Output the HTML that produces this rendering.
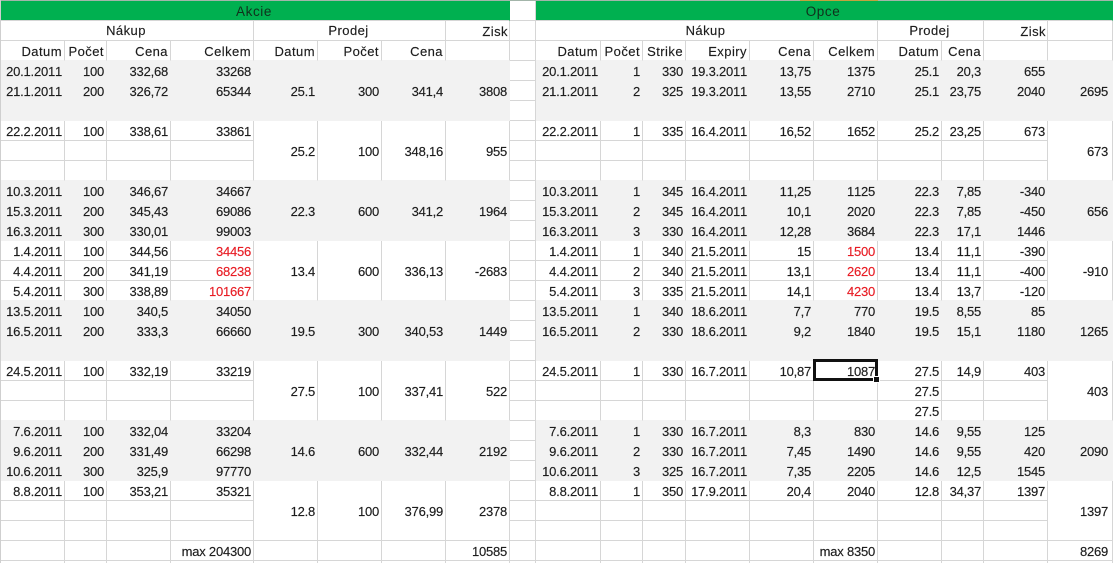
<!DOCTYPE html>
<html><head><meta charset="utf-8"><style>
html,body{margin:0;padding:0;background:#fff;width:1113px;height:563px;overflow:hidden;position:relative}
table{position:absolute;left:1px;top:1px;width:1112px;table-layout:fixed;border-collapse:separate;border-spacing:0;font:13px/17px "Liberation Sans",sans-serif;font-kerning:none;letter-spacing:-.22px;color:#1c1c1c;-webkit-text-stroke:.15px #1c1c1c}
td{box-sizing:border-box;height:20px;padding:2px 2px 0 0;text-align:right;white-space:nowrap;overflow:hidden;border-right:1px solid #d6d6d6;border-bottom:1px solid #d6d6d6}
tr.g td{background:#f2f2f2;border-color:#f2f2f2}
tr.l td{border-bottom-color:#f2f2f2}
td.m{border-bottom-color:#f2f2f2}
tr.g td.x,tr.l td.x,td.x{background:#fff;border-color:#d6d6d6}
td.t{background:#00b050;border-color:#00b050;border-bottom-color:#d6d6d6;text-align:center;color:#10301c;font-size:13.5px;letter-spacing:.6px;padding-top:2px;line-height:17px;-webkit-text-stroke:0}
.h td.c{text-align:center;letter-spacing:.45px;padding-top:1px;line-height:18px}
.h td{letter-spacing:.45px}
td.e{padding-right:4px}
td.r{color:#e81c24;-webkit-text-stroke:.15px #e81c24}
.h td.z{padding-top:3px;line-height:16px;padding-right:1px}
#a{position:absolute;left:0;top:0;width:1113px;height:1px;background:#a3b5aa}
#o{position:absolute;left:800px;top:0;width:78px;height:1px;background:#c2a23e}
#b{position:absolute;left:0;top:0;width:1px;height:563px;background:#cfcfcf}
#s{position:absolute;left:813px;top:359px;width:59px;height:16px;border:3px solid #111}
#k{position:absolute;left:874px;top:377px;width:5px;height:5px;background:#111;border:1px solid #fff;box-sizing:content-box;margin:-1px}
</style></head><body>
<table>
<colgroup><col style="width:64px"><col style="width:42px"><col style="width:64px"><col style="width:83px"><col style="width:64px"><col style="width:64px"><col style="width:64px"><col style="width:64px"><col style="width:26px"><col style="width:65px"><col style="width:42px"><col style="width:43px"><col style="width:64px"><col style="width:64px"><col style="width:64px"><col style="width:64px"><col style="width:42px"><col style="width:64px"><col style="width:65px"></colgroup>
<tr><td class="t" colspan="8">Akcie</td><td class="x"></td><td class="t" colspan="10">Opce</td></tr>
<tr class="h"><td class="c" colspan="4">Nákup</td><td class="c" colspan="3">Prodej</td><td class="z">Zisk</td><td class="x"></td><td class="c" colspan="6">Nákup</td><td class="c" colspan="2">Prodej</td><td class="z">Zisk</td><td></td></tr>
<tr class="h l"><td>Datum</td><td>Počet</td><td>Cena</td><td>Celkem</td><td>Datum</td><td>Počet</td><td>Cena</td><td></td><td class="x"></td><td>Datum</td><td>Počet</td><td>Strike</td><td>Expiry</td><td>Cena</td><td>Celkem</td><td>Datum</td><td>Cena</td><td></td><td></td></tr>

<tr class="g"><td>20.1.2011</td><td>100</td><td>332,68</td><td>33268</td><td rowspan="3">25.1</td><td rowspan="3">300</td><td rowspan="3">341,4</td><td rowspan="3">3808</td><td class="x"></td><td>20.1.2011</td><td>1</td><td>330</td><td>19.3.2011</td><td>13,75</td><td>1375</td><td>25.1</td><td>20,3</td><td>655</td><td class="e" rowspan="3">2695</td></tr>
<tr class="g"><td>21.1.2011</td><td>200</td><td>326,72</td><td>65344</td><td class="x"></td><td>21.1.2011</td><td>2</td><td>325</td><td>19.3.2011</td><td>13,55</td><td>2710</td><td>25.1</td><td>23,75</td><td>2040</td></tr>
<tr class="g"><td></td><td></td><td></td><td></td><td class="x"></td><td></td><td></td><td></td><td></td><td></td><td></td><td></td><td></td><td></td></tr>

<tr><td>22.2.2011</td><td>100</td><td>338,61</td><td>33861</td><td class="m" rowspan="3">25.2</td><td class="m" rowspan="3">100</td><td class="m" rowspan="3">348,16</td><td class="m" rowspan="3">955</td><td class="x"></td><td>22.2.2011</td><td>1</td><td>335</td><td>16.4.2011</td><td>16,52</td><td>1652</td><td>25.2</td><td>23,25</td><td>673</td><td class="e m" rowspan="3">673</td></tr>
<tr><td></td><td></td><td></td><td></td><td class="x"></td><td></td><td></td><td></td><td></td><td></td><td></td><td></td><td></td><td></td></tr>
<tr class="l"><td></td><td></td><td></td><td></td><td class="x"></td><td></td><td></td><td></td><td></td><td></td><td></td><td></td><td></td><td></td></tr>

<tr class="g"><td>10.3.2011</td><td>100</td><td>346,67</td><td>34667</td><td rowspan="3">22.3</td><td rowspan="3">600</td><td rowspan="3">341,2</td><td rowspan="3">1964</td><td class="x"></td><td>10.3.2011</td><td>1</td><td>345</td><td>16.4.2011</td><td>11,25</td><td>1125</td><td>22.3</td><td>7,85</td><td>-340</td><td class="e" rowspan="3">656</td></tr>
<tr class="g"><td>15.3.2011</td><td>200</td><td>345,43</td><td>69086</td><td class="x"></td><td>15.3.2011</td><td>2</td><td>345</td><td>16.4.2011</td><td>10,1</td><td>2020</td><td>22.3</td><td>7,85</td><td>-450</td></tr>
<tr class="g"><td>16.3.2011</td><td>300</td><td>330,01</td><td>99003</td><td class="x"></td><td>16.3.2011</td><td>3</td><td>330</td><td>16.4.2011</td><td>12,28</td><td>3684</td><td>22.3</td><td>17,1</td><td>1446</td></tr>

<tr><td>1.4.2011</td><td>100</td><td>344,56</td><td class="r">34456</td><td class="m" rowspan="3">13.4</td><td class="m" rowspan="3">600</td><td class="m" rowspan="3">336,13</td><td class="m" rowspan="3">-2683</td><td class="x"></td><td>1.4.2011</td><td>1</td><td>340</td><td>21.5.2011</td><td>15</td><td class="r">1500</td><td>13.4</td><td>11,1</td><td>-390</td><td class="e m" rowspan="3">-910</td></tr>
<tr><td>4.4.2011</td><td>200</td><td>341,19</td><td class="r">68238</td><td class="x"></td><td>4.4.2011</td><td>2</td><td>340</td><td>21.5.2011</td><td>13,1</td><td class="r">2620</td><td>13.4</td><td>11,1</td><td>-400</td></tr>
<tr class="l"><td>5.4.2011</td><td>300</td><td>338,89</td><td class="r">101667</td><td class="x"></td><td>5.4.2011</td><td>3</td><td>335</td><td>21.5.2011</td><td>14,1</td><td class="r">4230</td><td>13.4</td><td>13,7</td><td>-120</td></tr>

<tr class="g"><td>13.5.2011</td><td>100</td><td>340,5</td><td>34050</td><td rowspan="3">19.5</td><td rowspan="3">300</td><td rowspan="3">340,53</td><td rowspan="3">1449</td><td class="x"></td><td>13.5.2011</td><td>1</td><td>340</td><td>18.6.2011</td><td>7,7</td><td>770</td><td>19.5</td><td>8,55</td><td>85</td><td class="e" rowspan="3">1265</td></tr>
<tr class="g"><td>16.5.2011</td><td>200</td><td>333,3</td><td>66660</td><td class="x"></td><td>16.5.2011</td><td>2</td><td>330</td><td>18.6.2011</td><td>9,2</td><td>1840</td><td>19.5</td><td>15,1</td><td>1180</td></tr>
<tr class="g"><td></td><td></td><td></td><td></td><td class="x"></td><td></td><td></td><td></td><td></td><td></td><td></td><td></td><td></td><td></td></tr>

<tr><td>24.5.2011</td><td>100</td><td>332,19</td><td>33219</td><td class="m" rowspan="3">27.5</td><td class="m" rowspan="3">100</td><td class="m" rowspan="3">337,41</td><td class="m" rowspan="3">522</td><td class="x"></td><td>24.5.2011</td><td>1</td><td>330</td><td>16.7.2011</td><td>10,87</td><td>1087</td><td>27.5</td><td>14,9</td><td>403</td><td class="e m" rowspan="3">403</td></tr>
<tr><td></td><td></td><td></td><td></td><td class="x"></td><td></td><td></td><td></td><td></td><td></td><td></td><td>27.5</td><td></td><td></td></tr>
<tr class="l"><td></td><td></td><td></td><td></td><td class="x"></td><td></td><td></td><td></td><td></td><td></td><td></td><td>27.5</td><td></td><td></td></tr>

<tr class="g"><td>7.6.2011</td><td>100</td><td>332,04</td><td>33204</td><td rowspan="3">14.6</td><td rowspan="3">600</td><td rowspan="3">332,44</td><td rowspan="3">2192</td><td class="x"></td><td>7.6.2011</td><td>1</td><td>330</td><td>16.7.2011</td><td>8,3</td><td>830</td><td>14.6</td><td>9,55</td><td>125</td><td class="e" rowspan="3">2090</td></tr>
<tr class="g"><td>9.6.2011</td><td>200</td><td>331,49</td><td>66298</td><td class="x"></td><td>9.6.2011</td><td>2</td><td>330</td><td>16.7.2011</td><td>7,45</td><td>1490</td><td>14.6</td><td>9,55</td><td>420</td></tr>
<tr class="g"><td>10.6.2011</td><td>300</td><td>325,9</td><td>97770</td><td class="x"></td><td>10.6.2011</td><td>3</td><td>325</td><td>16.7.2011</td><td>7,35</td><td>2205</td><td>14.6</td><td>12,5</td><td>1545</td></tr>

<tr><td>8.8.2011</td><td>100</td><td>353,21</td><td>35321</td><td rowspan="3">12.8</td><td rowspan="3">100</td><td rowspan="3">376,99</td><td rowspan="3">2378</td><td class="x"></td><td>8.8.2011</td><td>1</td><td>350</td><td>17.9.2011</td><td>20,4</td><td>2040</td><td>12.8</td><td>34,37</td><td>1397</td><td class="e" rowspan="3">1397</td></tr>
<tr><td></td><td></td><td></td><td></td><td class="x"></td><td></td><td></td><td></td><td></td><td></td><td></td><td></td><td></td><td></td></tr>
<tr><td></td><td></td><td></td><td></td><td class="x"></td><td></td><td></td><td></td><td></td><td></td><td></td><td></td><td></td><td></td></tr>

<tr><td></td><td></td><td></td><td>max 204300</td><td></td><td></td><td></td><td>10585</td><td class="x"></td><td></td><td></td><td></td><td></td><td></td><td>max 8350</td><td></td><td></td><td></td><td class="e">8269</td></tr>
<tr><td></td><td></td><td></td><td></td><td></td><td></td><td></td><td></td><td class="x"></td><td></td><td></td><td></td><td></td><td></td><td></td><td></td><td></td><td></td><td></td></tr>
</table>
<div id="a"></div><div id="o"></div><div id="b"></div>
<div id="s"></div><div id="k"></div>
</body></html>
